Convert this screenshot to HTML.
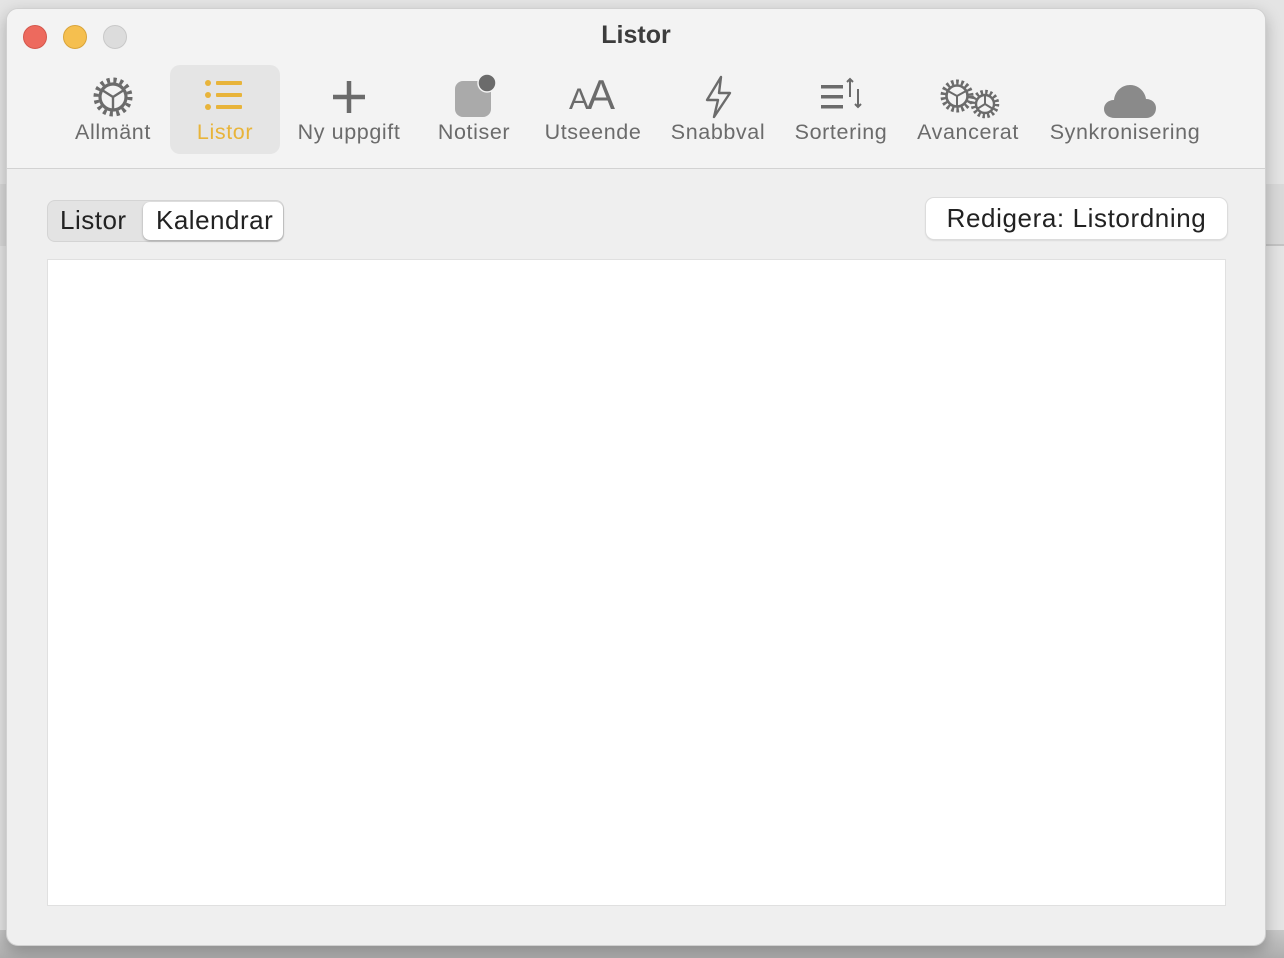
<!DOCTYPE html>
<html><head><meta charset="utf-8"><style>
*{margin:0;padding:0;box-sizing:border-box}
body{width:1284px;height:958px;background:#e4e4e4;position:relative;overflow:hidden;font-family:"Liberation Sans",sans-serif}
.shadow{position:absolute;left:0;top:930px;width:1284px;height:28px;background:linear-gradient(#c8c8c8,#aeaeae)}
.rstrip{position:absolute;left:1266px;top:184px;width:18px;height:62px;background:#d9d9d9;border-bottom:2px solid #c4c4c4}
.lstrip{position:absolute;left:0;top:184px;width:8px;height:62px;background:#d9d9d9}
.win{position:absolute;left:6px;top:8px;width:1260px;height:938px;background:#efefef;border-radius:12px;border:1px solid #d0d0d0;overflow:hidden;box-shadow:0 6px 16px rgba(0,0,0,.25)}
.tb{position:absolute;left:0;top:0;width:100%;height:160px;background:#f3f3f3;border-bottom:1px solid #d2d2d2}
.dot{position:absolute;top:16px;width:24px;height:24px;border-radius:50%}
.title{position:absolute;left:0;width:100%;top:12px;text-align:center;font-weight:bold;font-size:25px;color:#3c3c3c}
.lbl{position:absolute;top:111px;transform:translateX(-50%);font-size:21.5px;letter-spacing:0.6px;color:#6b6b6b;white-space:nowrap}
.sel{position:absolute;left:163px;top:56px;width:110px;height:89px;background:#e5e5e5;border-radius:10px}
svg{position:absolute}
.seg{position:absolute;left:40px;top:191px;width:237px;height:42px;background:#e3e3e3;border-radius:8px;border:1px solid #d4d4d4}
.seg span{position:absolute;top:4px;font-size:26px;letter-spacing:0.5px;color:#222}
.segw{position:absolute;left:95px;top:1px;width:140px;height:38px;background:#fff;border-radius:7px;box-shadow:0 1px 2px rgba(0,0,0,.3)}
.btn{position:absolute;left:919px;top:189px;width:301px;height:41px;background:#fff;border-radius:8px;box-shadow:0 0 0 1px #dcdcdc,0 1px 2px rgba(0,0,0,.2);font-size:26px;letter-spacing:0.6px;color:#222;text-align:center;line-height:40px}
.box{position:absolute;left:40px;top:250px;width:1179px;height:647px;background:#fff;border:1px solid #e0e0e0}
</style></head><body>
<div class="lstrip"></div><div class="rstrip"></div><div class="shadow"></div>
<div class="win">
<div class="tb">
<div class="dot" style="left:16px;background:#ed6a5e;border:1px solid #d4574c"></div>
<div class="dot" style="left:56px;background:#f5bf4f;border:1px solid #d9a43a"></div>
<div class="dot" style="left:96px;background:#dcdcdc;border:1px solid #c8c8c8"></div>
<div class="title">Listor</div>
<div class="sel"></div>
<!-- gear -->
<svg style="left:84px;top:66px" width="44" height="44" viewBox="0 0 44 44"><g fill="none" stroke="#6b6b6b"><circle cx="22" cy="22" r="17" stroke-width="5" stroke-dasharray="3.2 3.5"/><circle cx="22" cy="22" r="13" stroke-width="3.2"/><path d="M22 22L11 15M22 22L33 15M22 22V35" stroke-width="2.4"/></g></svg>
<!-- list -->
<svg style="left:196px;top:70px" width="44" height="36" viewBox="0 0 44 36"><g fill="#e8b43a"><circle cx="5" cy="4" r="3"/><circle cx="5" cy="16" r="3"/><circle cx="5" cy="28" r="3"/><rect x="13" y="2" width="26" height="4" rx="1"/><rect x="13" y="14" width="26" height="4" rx="1"/><rect x="13" y="26" width="26" height="4" rx="1"/></g></svg>
<!-- plus -->
<svg style="left:324px;top:70px" width="36" height="36" viewBox="0 0 36 36"><path d="M18 2V34M2 18H34" stroke="#6b6b6b" stroke-width="4.5"/></svg>
<!-- notiser -->
<svg style="left:446px;top:62px" width="46" height="50" viewBox="0 0 46 50"><rect x="2" y="10" width="36" height="36" rx="8" fill="#aaa"/><circle cx="34" cy="12" r="9" fill="#6b6b6b" stroke="#f3f3f3" stroke-width="1.5"/></svg>
<!-- AA -->
<svg style="left:560px;top:66px" width="56" height="40" viewBox="0 0 56 40"><text x="2" y="34" font-family="Liberation Sans" font-size="30" fill="#6b6b6b">A</text><text x="20" y="34" font-family="Liberation Sans" font-size="42" fill="#6b6b6b">A</text></svg>
<!-- bolt -->
<svg style="left:692px;top:66px" width="40" height="44" viewBox="0 0 40 44"><path d="M22 2L8 25H19L15 42L31 18H20Z" fill="none" stroke="#6b6b6b" stroke-width="2.4" stroke-linejoin="round"/></svg>
<!-- sort -->
<svg style="left:812px;top:68px" width="46" height="40" viewBox="0 0 46 40"><g fill="#6b6b6b"><rect x="2" y="8" width="22" height="3.5"/><rect x="2" y="18" width="22" height="3.5"/><rect x="2" y="28" width="22" height="3.5"/></g><g stroke="#6b6b6b" stroke-width="2" fill="none"><path d="M31 2V20M28 5L31 2L34 5"/><path d="M39 12V30M36 27L39 30L42 27"/></g></svg>
<!-- gears -->
<svg style="left:932px;top:70px" width="64" height="44" viewBox="0 0 64 44"><g fill="none" stroke="#6b6b6b"><circle cx="18" cy="17" r="14" stroke-width="5" stroke-dasharray="2.6 2.4"/><circle cx="18" cy="17" r="10.5" stroke-width="2.6"/><path d="M18 17L9 12M18 17L27 12M18 17V28" stroke-width="2"/><circle cx="46" cy="25" r="12" stroke-width="4.5" stroke-dasharray="2.4 2.3"/><circle cx="46" cy="25" r="9" stroke-width="2.4"/><path d="M46 25V16M46 25L38 30M46 25L54 30" stroke-width="2"/></g></svg>
<!-- cloud -->
<svg style="left:1094px;top:68px" width="60" height="44" viewBox="0 0 60 44"><path d="M14 41C7 41 3 37 3 32C3 27 7 23 13 23C14 14 21 8 29 8C38 8 44 15 45 22C51 22 55 26 55 31C55 37 51 41 45 41Z" fill="#8a8a8a"/></svg>
<div class="lbl" style="left:106px">Allmänt</div>
<div class="lbl" style="left:218px;color:#e8b43a">Listor</div>
<div class="lbl" style="left:342px">Ny uppgift</div>
<div class="lbl" style="left:467px">Notiser</div>
<div class="lbl" style="left:586px">Utseende</div>
<div class="lbl" style="left:711px">Snabbval</div>
<div class="lbl" style="left:834px">Sortering</div>
<div class="lbl" style="left:961px">Avancerat</div>
<div class="lbl" style="left:1118px">Synkronisering</div>
</div>
<div class="seg"><div class="segw"></div><span style="left:12px">Listor</span><span style="left:108px">Kalendrar</span></div>
<div class="btn">Redigera: Listordning</div>
<div class="box"></div>
</div>
</body></html>
